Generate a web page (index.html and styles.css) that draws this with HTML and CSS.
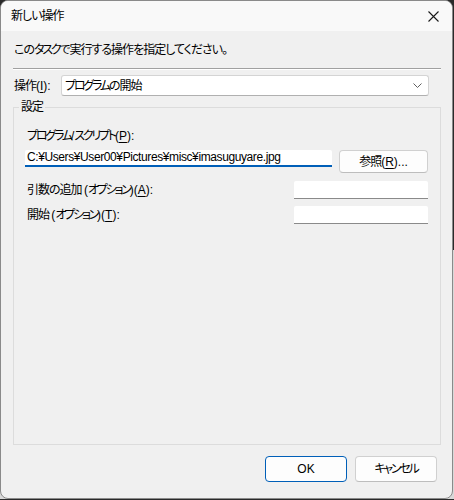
FILE: index.html
```html
<!DOCTYPE html>
<html lang="ja">
<head>
<meta charset="utf-8">
<title>新しい操作</title>
<link rel="stylesheet" href="styles.css">
</head>
<body>
<div class="window">
  <div class="titlebar">
    <span class="title">新しい操作</span>
    <svg class="close" width="11" height="11" viewBox="0 0 11 11"><path d="M0.5 0.5L10.5 10.5M10.5 0.5L0.5 10.5" stroke="#1a1a1a" stroke-width="1.1" fill="none"/></svg>
  </div>
  <div class="content">
    <p class="intro">この<span class="kt">タスク</span>で実行する操作を指定してください。</p>
    <div class="sep"></div>
    <div class="action-row">
      <span class="action-label">操作<span class="key">(<u>I</u>):</span></span>
      <div class="combo">
        <span class="combo-text"><span class="kt">プログラム</span>の開始</span>
        <svg class="chevron" width="9" height="5" viewBox="0 0 9 5"><path d="M0.5 0.5L4.5 4.5L8.5 0.5" stroke="#5f5f5f" stroke-width="1" fill="none"/></svg>
      </div>
    </div>
    <div class="group">
      <span class="group-title">設定</span>
      <div class="field-label"><span class="kt">プログラム</span><span class="key">/</span><span class="kt">スクリプト</span><span class="key">(<u>P</u>):</span></div>
      <div class="path-row">
        <div class="edit focused">C:¥Users¥User00¥Pictures¥misc¥imasuguyare.jpg</div>
        <div class="btn browse">参照<span class="key">(<u>R</u>)...</span></div>
      </div>
      <div class="opt-row first">
        <span class="opt-label">引数の追加 <span class="key">(</span><span class="kt">オプション</span><span class="key">)(<u>A</u>):</span></span>
        <div class="edit small"></div>
      </div>
      <div class="opt-row">
        <span class="opt-label">開始 <span class="key">(</span><span class="kt">オプション</span><span class="key">)(<u>T</u>):</span></span>
        <div class="edit small"></div>
      </div>
    </div>
    <div class="buttons">
      <div class="btn dlg default"><span class="key">OK</span></div>
      <div class="btn dlg"><span class="kt">キャンセル</span></div>
    </div>
  </div>
</div>
</body>
</html>
```

FILE: styles.css
```css
html {
  background: linear-gradient(#2a2a2a 0, #2a2a2a 250px, #d8d8d8 250px);
}
body {
  margin: 0;
  font-family: "Liberation Sans", "Noto Sans CJK JP", sans-serif;
  font-size: 12px;
  font-feature-settings: "palt";
  letter-spacing: -1px;
  color: #000;
}
.key {
  letter-spacing: 0;
}
.kt {
  letter-spacing: -2.2px;
}
u {
  text-decoration: underline;
  text-decoration-thickness: 1px;
  text-underline-offset: 2px;
}
.window {
  box-sizing: border-box;
  width: 453px;
  height: 499px;
  border: 1px solid #8a8a8a;
  border-radius: 8px;
  background: #f0f0f0;
  overflow: hidden;
  display: flex;
  flex-direction: column;
}
.titlebar {
  height: 30px;
  flex: none;
  background: #f9f9f9;
  display: flex;
  align-items: center;
  justify-content: space-between;
  padding: 0 13px 0 10px;
}
.title {
  line-height: 16px;
}
.close {
  display: block;
}
.content {
  flex: 1;
  display: flex;
  flex-direction: column;
  padding: 0 11px 0 12px;
}
.intro {
  margin: 11px 0 0 1px;
  line-height: 16px;
}
.sep {
  margin-top: 10px;
  height: 1px;
  background: #a0a0a0;
  border-bottom: 1px solid #ffffff;
}
.action-row {
  margin-top: 5px;
  display: flex;
  align-items: center;
  height: 21px;
}
.action-label {
  width: 47px;
  margin-left: 1px;
  line-height: 16px;
}
.combo {
  box-sizing: border-box;
  width: 368px;
  height: 21px;
  background: #fff;
  border: 1px solid #d4d4d4;
  border-bottom-color: #b0b0b0;
  border-radius: 3px;
  display: flex;
  align-items: center;
  justify-content: space-between;
  padding: 0 6px 0 3px;
}
.combo-text {
  line-height: 16px;
}
.chevron {
  display: block;
}
.group {
  flex: 1;
  margin-top: 11px;
  border: 1px solid #dcdcdc;
  padding: 0 12px 0 11px;
  display: flex;
  flex-direction: column;
}
.group-title {
  align-self: flex-start;
  margin: -9px 0 0 -6px;
  padding: 0 2px;
  line-height: 16px;
  background: #f0f0f0;
}
.field-label {
  margin: 13px 0 0 2px;
  line-height: 16px;
}
.path-row {
  margin-top: 6px;
  display: flex;
  align-items: flex-start;
  justify-content: space-between;
}
.edit {
  box-sizing: border-box;
  background: #fff;
  height: 18px;
  border-bottom: 1px solid #8a8a8a;
  border-radius: 2px 2px 0 0;
  line-height: 16px;
  padding-left: 2px;
  white-space: nowrap;
  overflow: hidden;
  letter-spacing: -0.4px;
}
.edit.focused {
  width: 307px;
  height: 17px;
  border-bottom: 2px solid #005fb8;
  line-height: 15px;
}
.edit.small {
  width: 134px;
}
.btn {
  box-sizing: border-box;
  background: #fdfdfd;
  border: 1px solid #d0d0d0;
  border-bottom-color: #bdbdbd;
  border-radius: 4px;
  display: flex;
  align-items: center;
  justify-content: center;
  line-height: 16px;
}
.browse {
  width: 89px;
  height: 23px;
}
.opt-row {
  margin-top: 7px;
  display: flex;
  align-items: center;
  justify-content: space-between;
}
.opt-row.first {
  margin-top: 8px;
}
.opt-label {
  margin-left: 2px;
  line-height: 16px;
}
.buttons {
  margin: 11px 0 16px;
  padding-right: 4px;
  display: flex;
  justify-content: flex-end;
  gap: 8px;
}
.dlg {
  width: 82px;
  height: 26px;
}
.dlg.default {
  border-color: #005fb8;
}
```
